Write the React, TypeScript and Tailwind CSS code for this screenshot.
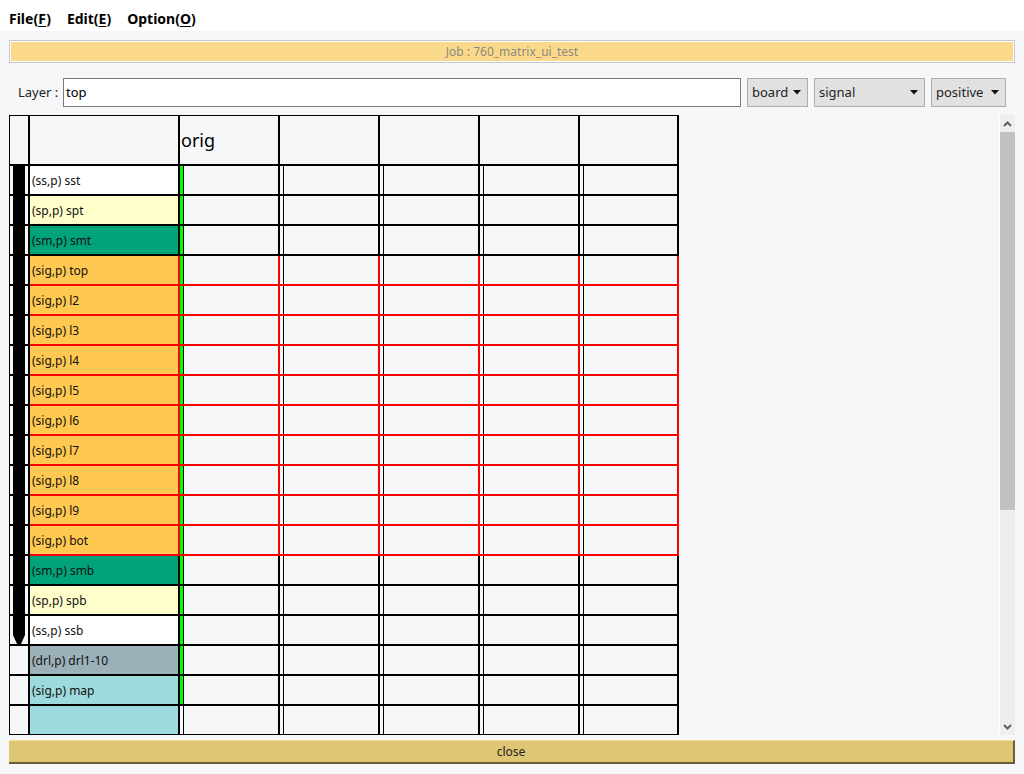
import React from 'react';

type Row = {
  label: string;
  bg: string;
  red: boolean;
  green: boolean;
};

const rows: Row[] = [
  { label: '(ss,p) sst', bg: 'bg-white', red: false, green: true },
  { label: '(sp,p) spt', bg: 'bg-[#ffffcc]', red: false, green: true },
  { label: '(sm,p) smt', bg: 'bg-[#00a37a]', red: false, green: true },
  { label: '(sig,p) top', bg: 'bg-[#ffc850]', red: true, green: true },
  { label: '(sig,p) l2', bg: 'bg-[#ffc850]', red: true, green: true },
  { label: '(sig,p) l3', bg: 'bg-[#ffc850]', red: true, green: true },
  { label: '(sig,p) l4', bg: 'bg-[#ffc850]', red: true, green: true },
  { label: '(sig,p) l5', bg: 'bg-[#ffc850]', red: true, green: true },
  { label: '(sig,p) l6', bg: 'bg-[#ffc850]', red: true, green: true },
  { label: '(sig,p) l7', bg: 'bg-[#ffc850]', red: true, green: true },
  { label: '(sig,p) l8', bg: 'bg-[#ffc850]', red: true, green: true },
  { label: '(sig,p) l9', bg: 'bg-[#ffc850]', red: true, green: true },
  { label: '(sig,p) bot', bg: 'bg-[#ffc850]', red: true, green: true },
  { label: '(sm,p) smb', bg: 'bg-[#00a37a]', red: false, green: true },
  { label: '(sp,p) spb', bg: 'bg-[#ffffcc]', red: false, green: true },
  { label: '(ss,p) ssb', bg: 'bg-white', red: false, green: true },
  { label: '(drl,p) drl1-10', bg: 'bg-[#9bb0b9]', red: false, green: true },
  { label: '(sig,p) map', bg: 'bg-[#9ddadd]', red: false, green: true },
  { label: '', bg: 'bg-[#9ddadd]', red: false, green: false },
];

const dataWidths = ['w-[100px]', 'w-[100px]', 'w-[100px]', 'w-[100px]', 'w-[99px]'];

const Caret = () => (
  <svg width="8" height="5" viewBox="0 0 8 5" className="shrink-0">
    <polygon points="0,0 8,0 4,4.5" fill="#111" />
  </svg>
);

const Select = ({ label, width }: { label: string; width: string }) => (
  <div
    className={`${width} h-[29px] shrink-0 flex items-center justify-between pl-[4px] pr-[6px] bg-[#e1e1e1] border border-[#adadad] text-[13px] text-[#222]`}
  >
    <span>{label}</span>
    <Caret />
  </div>
);

const MenuItem = ({ name, key1 }: { name: string; key1: string }) => (
  <span className="text-[14px] font-bold text-black">
    {name}(<span className="underline underline-offset-2">{key1}</span>)
  </span>
);

const App = () => {
  return (
    <div
      className="w-[1024px] h-[774px] bg-[#f6f7f9] flex flex-col overflow-hidden"
      style={{ fontFamily: '"Noto Sans", "Open Sans", sans-serif' }}
    >
      {/* menu */}
      <div className="h-[31px] bg-white flex items-center gap-[16px] pl-[9px] pt-[5px] shrink-0">
        <MenuItem name="File" key1="F" />
        <MenuItem name="Edit" key1="E" />
        <MenuItem name="Option" key1="O" />
      </div>

      <div className="flex-1 flex flex-col px-[9px]">
        {/* job bar */}
        <div className="mt-[9px] border border-[#c8c8c8] bg-white p-px">
          <div className="h-[19px] bg-[#fad98b] flex items-center justify-center text-[12px] text-[#8a8a80]">
            Job : 760_matrix_ui_test
          </div>
        </div>

        {/* layer row */}
        <div className="mt-[15px] h-[29px] flex items-center gap-[6px] pr-[9px]">
          <div className="w-[48px] pl-[9px] text-[13px] text-[#222] shrink-0 whitespace-nowrap">Layer :</div>
          <div className="flex-1 h-[29px] bg-white border border-[#7a7a7a] flex items-center pl-[2px] text-[13px] text-black">
            top
          </div>
          <Select label="board" width="w-[61px]" />
          <Select label="signal" width="w-[111px]" />
          <Select label="positive" width="w-[75px]" />
        </div>

        {/* matrix */}
        <div className="mt-[8px] h-[620px] flex">
          <div className="flex-1 overflow-hidden">
            <div className="relative w-fit border-t border-l border-black">
              {/* header */}
              <div className="flex h-[50px]">
                <div className="w-[20px] border-r-2 border-b-2 border-black shrink-0" />
                <div className="w-[150px] border-r-2 border-b-2 border-black shrink-0" />
                {dataWidths.map((w, i) => (
                  <div
                    key={i}
                    className={`${w} border-r-2 border-b-2 border-black shrink-0 flex items-center pl-px text-[18px] text-black`}
                  >
                    {i === 0 ? 'orig' : ''}
                  </div>
                ))}
              </div>

              {rows.map((row, r) => (
                <div key={r} className="flex h-[30px]">
                  <div className="w-[20px] border-r-2 border-b-2 border-black shrink-0" />
                  <div
                    className={`w-[150px] shrink-0 border-r-2 border-b-2 ${row.red ? 'border-[#ff0000]' : 'border-black'} ${row.bg} flex items-center pl-[2px] pt-px text-[12px] text-[#111]`}
                  >
                    {row.label}
                  </div>
                  {dataWidths.map((w, i) => (
                    <div
                      key={i}
                      className={`${w} shrink-0 flex border-b-2 border-r-2 ${row.red ? 'border-[#ff0000]' : 'border-black'}`}
                    >
                      <div className={`w-[3px] shrink-0 ${i === 0 && row.green ? 'bg-[#00ff00]' : ''}`} />
                      <div className="w-px shrink-0 bg-black" />
                    </div>
                  ))}
                </div>
              ))}

              {/* layer span bar */}
              <svg
                width="12"
                height="479"
                viewBox="0 0 12 479"
                className="absolute left-[3px] top-[50px]"
              >
                <polygon points="0,0 12,0 12,469 8,478 4,478 0,469" fill="#000" />
              </svg>
            </div>
          </div>

          {/* scrollbar */}
          <div className="w-[16px] flex flex-col bg-[#eeeeee] border-l border-white">
            <div className="h-[17px] flex items-center justify-center">
              <svg width="9" height="6" viewBox="0 0 9 6">
                <polyline points="1,5 4.5,1.5 8,5" fill="none" stroke="#606060" strokeWidth="2" />
              </svg>
            </div>
            <div className="h-[378px] bg-[#c2c2c2]" />
            <div className="flex-1" />
            <div className="h-[17px] flex items-center justify-center">
              <svg width="9" height="6" viewBox="0 0 9 6">
                <polyline points="1,1 4.5,4.5 8,1" fill="none" stroke="#606060" strokeWidth="2" />
              </svg>
            </div>
          </div>
        </div>

        {/* close */}
        <div className="mt-[5px] h-[24px] bg-[#dfc675] border-t border-t-[#f8df8c] border-b-2 border-b-[#6b5e38] border-r-2 border-r-[#6b5e38] flex items-center justify-center text-[12px] text-[#222]">
          close
        </div>
      </div>
    </div>
  );
};

export default App;
